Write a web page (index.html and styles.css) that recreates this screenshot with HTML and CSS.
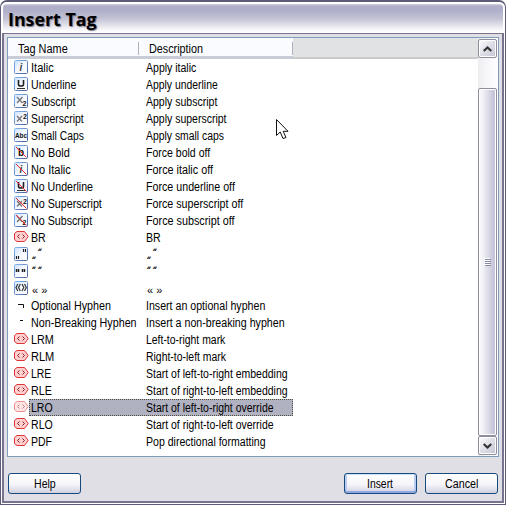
FILE: index.html
```
<!DOCTYPE html>
<html lang="en">
<head>
<meta charset="utf-8">
<title>Insert Tag</title>
<link rel="stylesheet" href="styles.css">
</head>
<body>
<svg class="defs" width="0" height="0">
  <defs>
    <linearGradient id="boxfill" x1="0" y1="0" x2="1" y2="1"><stop offset="0" stop-color="#c9e2ff"/><stop offset=".45" stop-color="#f3f7ff"/><stop offset="1" stop-color="#fff"/></linearGradient>
    <linearGradient id="boxline" x1="0" y1="0" x2="1" y2="1"><stop offset="0" stop-color="#86b8f0"/><stop offset="1" stop-color="#4a5f9c"/></linearGradient>
    <symbol id="box" viewBox="0 0 15 15"><rect x=".5" y=".5" width="13" height="13" rx="1" fill="url(#boxfill)" stroke="url(#boxline)"/></symbol>
    <symbol id="slash" viewBox="0 0 15 15"><path d="M2 2L12.500 12.500" stroke="#e8262c" stroke-width="1"/></symbol>
  </defs>
</svg>
<div class="window">
  <header class="titlebar"><h1><span data-w="89">Insert Tag</span></h1></header>
  <main class="client">
    <section class="list">
      <div class="content">
        <div class="head"><div class="hc name"><span data-w="50">Tag Name</span></div><div class="hc desc"><span data-w="54">Description</span></div></div>
        <div class="rows" id="rows"></div>
      </div>
      <div class="scroll">
        <div class="sb"><svg width="9" height="6" viewBox="0 0 9 6"><path d="M.7 5L4.500 1.500L8.300 5" fill="none" stroke="#333" stroke-width="2.200"/></svg></div>
        <div class="gap"></div>
        <div class="thumb"><i></i><i></i><i></i><i></i></div>
        <div class="sb"><svg width="9" height="6" viewBox="0 0 9 6"><path d="M.7 1L4.500 4.500L8.300 1" fill="none" stroke="#333" stroke-width="2.200"/></svg></div>
      </div>
    </section>
    <footer class="actions">
      <button><span data-w="22">Help</span></button>
      <button class="default"><span data-w="26">Insert</span></button>
      <button><span data-w="33">Cancel</span></button>
    </footer>
  </main>
  <svg class="cursor" width="13" height="21" viewBox="0 0 13 21"><path d="M.5 .5V16.500L4.200 13L7 19.500L10 18.500L7.200 12.300H12Z" fill="#fff" stroke="#111"/></svg>
</div>
<script src="app.js"></script>
</body>
</html>
```
FILE: styles.css
```
* { box-sizing: border-box; }
body { margin: 0; background: #fff; font: 12px/17px "Liberation Sans", Arial, sans-serif; color: #000; overflow: hidden; }
.defs { position: absolute; }
.window { position: relative; width: 506px; height: 505px; border: 1px solid #5e5b79; border-top-width: 2px; border-radius: 7px 7px 0 0; background: #e0dfe5; display: flex; flex-direction: column; overflow: hidden; }
.titlebar { height: 31px; flex: none; border: 2px solid #fff; border-bottom: 0; border-radius: 6px 6px 0 0; background: linear-gradient(#d4d4e2 0, #aeaec9 2px, #b0b0ca 7px, #c4c4d7 15px, #e6e6ee 22px, #fdfdfe 27px, #fff 29px); padding: 3px 0 0 5px; }
h1 { margin: 0; font: bold 18px/25px "Open Sans", "Noto Sans", sans-serif; text-shadow: 1px 1px 1px #77778a; }
[data-w] { display: inline-block; white-space: pre; transform-origin: 0 50%; }
.client { flex: 1; min-height: 0; margin: 0 1px 1px; border: 2px solid #77748f; border-top: 1px solid #77748f; box-shadow: 0 0 0 1px #fff; padding: 3px 4px 0 3px; background: #e0dfe5; }
.list { display: flex; width: 492px; height: 420px; border: 1px solid #7f9db9; background: #fff; }
.content { flex: 1; }
.head { height: 21px; display: flex; background: #e0e2e3; border-bottom: 2px solid #c8cacb; }
.hc { background: #fafbfe; position: relative; height: 21px; border-bottom: 3px solid #c9cbd6; padding: 2px 0 0 10px; line-height: 18px; }
.hc.name { width: 131px; }
.hc.desc { width: 154px; }
.hc::after { content: ""; position: absolute; right: 0; top: 4px; height: 13px; width: 1px; background: #aeb0c1; }
.row { height: 17px; display: flex; padding-left: 6px; }
.icon { width: 15px; height: 17px; padding-top: 1px; flex: none; }
.icon svg { display: block; overflow: visible; }
.icon text { font-family: "Liberation Sans", Arial, sans-serif; font-weight: bold; }
.label { display: flex; width: 264px; height: 17px; border: 1px solid transparent; line-height: 16px; }
.label .n { width: 116px; padding-left: 1px; flex: none; }
.selected .label { background: #b1b2c1; border: 1px dotted #4d4a40; }
.selected .icon { opacity: .55; }
.quote { display: flex; gap: 3px; font: 9px/8px "Liberation Sans", Arial, sans-serif; padding-top: 1px; }
.quote span { display: block; height: 8px; transform: skewX(-28deg); -webkit-text-stroke: .3px #000; }
.quote .low { margin-top: 8px; }
.quote.same { padding-top: 2px; }
.guil { font-size: 11px; display: block; padding: 3px 0 0 1px; line-height: 13px; }
.scroll { width: 20px; display: flex; flex-direction: column; padding: 1px 1px 1px 0; background: linear-gradient(90deg, #eeedef, #f7f7fc 50%, #fff); }
.sb { height: 19px; flex: none; border: 1px solid #8e8e9b; border-radius: 2px; box-shadow: inset 0 0 0 1px #fff; background: linear-gradient(135deg, #fff, #dedee8 50%, #c4c4d2); display: flex; align-items: center; justify-content: center; }
.gap { height: 30px; flex: none; }
.thumb { flex: 1; border: 1px solid #8e8e9f; border-radius: 2px; box-shadow: inset 0 0 0 1px #fff; background: linear-gradient(90deg, #f6f6fa 15%, #dedee9 50%, #c5c5dc 85%); display: flex; flex-direction: column; align-items: center; justify-content: center; gap: 1px; }
.thumb i { width: 6px; height: 1px; background: #8789a5; box-shadow: -1px -1px #fff; }
.actions { display: flex; gap: 8px; width: 491px; padding-left: 1px; padding-top: 16px; }
button { width: 73px; height: 21px; padding: 0; border: 1px solid #164a7c; border-radius: 3px; background: linear-gradient(#fff, #f5f5fa 55%, #d1d0e2); font: inherit; color: #000; line-height: 20px; display: flex; justify-content: center; }
button:first-child { margin-right: auto; }
.default { box-shadow: inset 0 1px #cee0ff, inset 0 -2px #8fa8e0, inset 2px 0 #b9cdf4, inset -2px 0 #b9cdf4; }
.cursor { position: absolute; left: 275px; top: 117px; }
```
FILE: app.js
```
const box = '<use href="#box" width="15" height="15"/>';
const slash = '<use href="#slash" width="15" height="15"/>';
const icon = body => `<svg width="15" height="15" viewBox="0 0 15 15">${body}</svg>`;
const glyphs = {
  i: '<text x="5.500" y="10.500" font-size="10" font-style="italic" fill="#444">i</text>',
  u: '<path d="M4.500 3V7.500Q4.500 9 7 9T9.500 7.500V3" fill="none" stroke="#222" stroke-width="1.600"/><path d="M3 11.500H11" stroke="#333"/>',
  sub: '<path d="M3 3L8.500 9M8.500 3L3 9" stroke="#777" stroke-width="1.400"/><text x="8.500" y="12" font-size="7" fill="#111">2</text>',
  sup: '<path d="M3 5L8 10.500M8 5L3 10.500" stroke="#777" stroke-width="1.400"/><text x="9" y="7.500" font-size="7" fill="#111">2</text>',
  caps: '<text x="1" y="10" font-size="7" textLength="12" lengthAdjust="spacingAndGlyphs" fill="#111">Abc</text>',
  b: '<text x="4" y="11" font-size="10" fill="#111">b</text>'
};
const tag = icon('<path d="M3 1.500H10.500L14.200 6.500L10.500 11.500H3L.5 9.500V3.500Z" fill="#ffd0d0" stroke="#e2333a"/><path d="M5.500 4.500L3.500 6.500L5.500 8.500M8.500 4.500L10.500 6.500L8.500 8.500" fill="none" stroke="#8e1a20"/>');
const boxed = g => icon(box + g);
const marks = {
  lowHigh: boxed('<path d="M2.500 9V12M4.500 9V12M9.500 2V5M11.500 2V5" stroke="#222" stroke-width="1.200"/>'),
  high: boxed('<path d="M2.500 5V8M4.500 5V8M8.500 5V8M10.500 5V8" stroke="#222" stroke-width="1.500"/>'),
  guil: boxed('<path d="M3.800 3L2 6.500L3.800 10M6.300 3L4.500 6.500L6.300 10M8 3L9.800 6.500L8 10M10.500 3L12.300 6.500L10.500 10" fill="none" stroke="#333" stroke-width="1.200"/>')
};
const lh = '<div class="quote"><span class="low">"</span><span>"</span></div>';
const hh = '<div class="quote same"><span>"</span><span>"</span></div>';
const gu = '<span class="guil">« »</span>';
const rows = [
  [boxed(glyphs.i), 'Italic', 23, 'Apply italic', 50],
  [boxed(glyphs.u), 'Underline', 45, 'Apply underline', 72],
  [boxed(glyphs.sub), 'Subscript', 44.5, 'Apply subscript', 71],
  [boxed(glyphs.sup), 'Superscript', 53, 'Apply superscript', 80.5],
  [boxed(glyphs.caps), 'Small Caps', 52.5, 'Apply small caps', 78],
  [boxed(glyphs.b + slash), 'No Bold', 39, 'Force bold off', 64],
  [boxed(glyphs.i + slash), 'No Italic', 39.5, 'Force italic off', 66.5],
  [boxed(glyphs.u + slash), 'No Underline', 62, 'Force underline off', 89],
  [boxed(glyphs.sup + slash), 'No Superscript', 70.5, 'Force superscript off', 97],
  [boxed(glyphs.sub + slash), 'No Subscript', 61.5, 'Force subscript off', 88],
  [tag, 'BR', 15, 'BR', 15],
  [marks.lowHigh, lh, 0, lh, 0],
  [marks.high, hh, 0, hh, 0],
  [marks.guil, gu, 0, gu, 0],
  [icon('<path d="M4 6.500H9.500V10" fill="none" stroke="#111"/>'), 'Optional Hyphen', 79.5, 'Insert an optional hyphen', 119.5],
  [icon('<path d="M6 5.500H9" stroke="#111"/>'), 'Non-Breaking Hyphen', 105.5, 'Insert a non-breaking hyphen', 138.5],
  [tag, 'LRM', 22.5, 'Left-to-right mark', 79],
  [tag, 'RLM', 23, 'Right-to-left mark', 80],
  [tag, 'LRE', 20, 'Start of left-to-right embedding', 141.5],
  [tag, 'RLE', 20.5, 'Start of right-to-left embedding', 141.5],
  [tag, 'LRO', 22, 'Start of left-to-right override', 127.5],
  [tag, 'RLO', 22, 'Start of right-to-left override', 127.5],
  [tag, 'PDF', 21, 'Pop directional formatting', 119.5]
];
const cell = (text, w) => w ? `<span data-w="${w}">${text}</span>` : text;
document.getElementById('rows').innerHTML = rows.map(([ic, name, nw, desc, dw], i) =>
  `<div class="row${i === 20 ? ' selected' : ''}"><div class="icon">${ic}</div><div class="label"><div class="n">${cell(name, nw)}</div><div>${cell(desc, dw)}</div></div></div>`).join('');

document.querySelectorAll('[data-w]').forEach(el => {
  const natural = el.offsetWidth;
  const target = Number(el.dataset.w);
  el.style.transform = `scaleX(${target / natural})`;
  el.style.marginRight = `${target - natural}px`;
});
```
